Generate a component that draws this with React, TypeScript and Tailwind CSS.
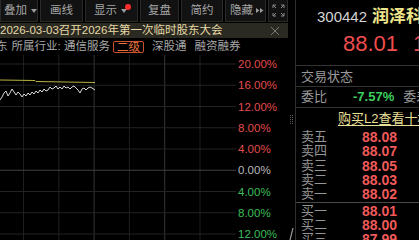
import React from 'react';

const tools = [
  { label: '叠加', w: 'w-[38px]', caret: true, pl: 'pl-[3px] justify-start' },
  { label: '画线', w: 'w-[43px]', pl: 'justify-center' },
  { label: '显示', w: 'w-[53px]', caret: true, dot: true, pl: 'pl-[8px] justify-start' },
  { label: '复盘', w: 'w-[39px]', pl: 'justify-center' },
  { label: '简约', w: 'w-[42px]', pl: 'justify-center' },
  { label: '隐藏', w: 'w-[41px]', more: true, pl: 'pl-[4px] justify-start' },
];

const axis = [
  { t: '20.00%', c: 'text-[#e04c4c]' },
  { t: '16.00%', c: 'text-[#e04c4c]' },
  { t: '12.00%', c: 'text-[#e04c4c]' },
  { t: '8.00%', c: 'text-[#e04c4c]' },
  { t: '4.00%', c: 'text-[#e04c4c]' },
  { t: '0.00%', c: 'text-[#b8b8b8]' },
  { t: '4.00%', c: 'text-[#3cbf5a]' },
  { t: '8.00%', c: 'text-[#3cbf5a]' },
  { t: '12.00%', c: 'text-[#3cbf5a]' },
];

const asks = [
  { k: '卖五', v: '88.08' },
  { k: '卖四', v: '88.07' },
  { k: '卖三', v: '88.05' },
  { k: '卖二', v: '88.03' },
  { k: '卖一', v: '88.02' },
];
const bids = [
  { k: '买一', v: '88.01' },
  { k: '买二', v: '88.00' },
  { k: '买三', v: '87.99' },
];

// price line, absolute y minus chart top (55)
const pricePts = [
  [0, 45], [2, 42], [4, 38], [6, 36], [8, 41], [10, 38], [12, 34], [14, 37], [16, 40], [18, 37],
  [20, 39], [22, 42], [24, 39], [26, 41], [28, 38], [30, 40], [32, 37], [34, 39], [36, 36], [38, 38],
  [40, 35], [42, 37], [44, 34], [46, 36], [48, 35], [50, 32], [52, 34], [54, 33], [56, 31], [58, 34],
  [60, 32], [62, 34], [64, 31], [66, 33], [68, 32], [70, 34], [72, 32], [74, 31], [76, 33], [78, 35],
  [80, 38], [82, 34], [84, 33], [86, 35], [88, 33], [90, 32], [92, 33], [95, 35],
];

const gridY = [0, 1, 2, 3, 4, 5, 6, 7, 8].map((i) => 9 + i * 21.25);
const gridX = [23.5, 58.8, 94.1, 129.4, 164.7, 200];

const Caret = () => (
  <svg width="6" height="4" viewBox="0 0 6 4" className="ml-[4px] shrink-0">
    <path d="M0 0h6L3 4z" fill="#9a9a9a" />
  </svg>
);

export default function App() {
  return (
    <div className="w-[419px] h-[240px] bg-black overflow-hidden flex font-['Liberation_Sans','Noto_Sans_CJK_SC',sans-serif]">
      {/* left: toolbar + chart */}
      <div className="w-[288px] shrink-0 flex flex-col">
        <div className="h-[23px] shrink-0 flex gap-[2px] items-start">
          {tools.map((t) => (
            <div
              key={t.label}
              className={`${t.w} ${t.pl} relative shrink-0 h-[22px] flex items-center whitespace-nowrap bg-[#121212] border-x border-b border-[#2a2a2a] text-[11.5px] text-[#a6a6a6]`}
            >
              <span>{t.label}</span>
              {t.caret && <Caret />}
              {t.more && (
                <svg width="8" height="5" viewBox="0 0 8 5" className="ml-[3px] shrink-0" fill="#9a9a9a">
                  <path d="M0 0l3.5 2.5L0 5zM4 0l3.5 2.5L4 5z" />
                </svg>
              )}
              {t.dot && <span className="absolute right-[6px] top-[4px] w-[6px] h-[6px] rounded-full bg-[#ff2d2d]" />}
            </div>
          ))}
          <div className="w-[20px] shrink-0 h-[22px] flex items-center justify-center bg-[#121212] border-x border-b border-[#2a2a2a]">
            <svg width="13" height="13" viewBox="0 0 13 13" fill="none" stroke="#8a8a8a" strokeWidth="1">
              <path d="M1 4V1h3M1 1l3 3M12 4V1H9M12 1L9 4M1 9v3h3M1 12l3-3M12 9v3H9M12 12L9 9" />
            </svg>
          </div>
        </div>

        <div className="h-[15px] shrink-0 flex items-center bg-[#2b2a22] text-[11.5px] text-[#e6d9a6] whitespace-nowrap">
          <span className="flex-1">2026-03-03召开2026年第一次临时股东大会</span>
          <svg width="10" height="10" viewBox="0 0 10 10" className="mr-[8px]" stroke="#7a7a72" strokeWidth="1">
            <path d="M1 1l8 8M9 1L1 9" />
          </svg>
        </div>

        <div className="h-[17px] shrink-0 flex items-center text-[11.5px] text-[#a8a8a8] whitespace-nowrap overflow-hidden">
          <span className="-ml-[4px]">东</span>
          <span className="ml-[4px]">所属行业: 通信服务</span>
          <span className="ml-[3px] px-[3px] h-[12px] leading-[11px] border border-[#c9522c] rounded-[2px] text-[#e8733e]">二级</span>
          <span className="ml-[8px]">深股通</span>
          <span className="ml-[8px]">融资融券</span>
        </div>

        <div className="flex-1 flex overflow-hidden">
          <svg width="236" height="185" className="shrink-0">
            {gridX.map((x, i) => (
              <line key={x} x1={x} y1="0" x2={x} y2="185" stroke={i === 2 || i === 4 ? '#353535' : '#1e1e1e'} strokeWidth="1" />
            ))}
            {gridY.map((y, i) => (
              <line key={y} x1="0" y1={y} x2="236" y2={y} stroke={i === 5 ? '#404040' : '#232323'} strokeWidth="1" />
            ))}
            <polyline points="0,25 35,25.5 36,26.5 95,27.5" fill="none" stroke="#b9b244" strokeWidth="1" />
            <polyline points={pricePts.map((p) => p.join(',')).join(' ')} fill="none" stroke="#d8d8d8" strokeWidth="1" />
          </svg>
          <div className="flex flex-col -mt-[1px] pl-[2px]">
            {axis.map((a, i) => (
              <div key={i} className={`h-[21.25px] shrink-0 flex items-center text-[11.5px] ${a.c}`}>
                {a.t}
              </div>
            ))}
          </div>
        </div>
      </div>

      {/* splitter */}
      <div className="w-[7px] shrink-0 flex flex-col items-center">
        <div className="h-[115px] shrink-0" />
        <svg width="4" height="9" viewBox="0 0 4 9" fill="#5a5a5a" className="shrink-0">
          <rect x="0" y="0" width="1" height="1" /><rect x="2" y="0" width="1" height="1" />
          <rect x="0" y="2" width="1" height="1" /><rect x="2" y="2" width="1" height="1" />
          <rect x="0" y="4" width="1" height="1" /><rect x="2" y="4" width="1" height="1" />
          <rect x="0" y="6" width="1" height="1" /><rect x="2" y="6" width="1" height="1" />
          <rect x="0" y="8" width="1" height="1" /><rect x="2" y="8" width="1" height="1" />
        </svg>
        <div className="flex-1" />
        <svg width="5" height="12" viewBox="0 0 5 12" className="shrink-0">
          <path d="M4 0L1 12" stroke="#9a9a9a" strokeWidth="1.2" />
        </svg>
      </div>

      {/* right: quote panel */}
      <div className="flex-1 min-w-0 flex flex-col border-l border-[#2e2e2e] whitespace-nowrap overflow-hidden">
        <div className="h-[33px] shrink-0 flex items-center pl-[8px]">
          <svg width="6" height="11" viewBox="0 0 6 11">
            <path d="M6 0v11L0 5.5z" fill="#6a6a6a" />
          </svg>
          <span className="ml-[13px] text-[15px] leading-[15px] text-[#d4d4d4]">300442</span>
          <span className="ml-[5px] text-[17px] font-bold text-[#efe58a]">润泽科技</span>
        </div>
        <div className="h-[33px] shrink-0 flex items-start pl-[47px] border-b border-[#333]">
          <span className="text-[22px] leading-[22px] text-[#f04d4d]">88.01</span>
          <span className="ml-[15px] text-[22px] leading-[22px] text-[#f04d4d]">1.39</span>
        </div>
        <div className="h-[21px] shrink-0 flex items-center pl-[5px] pt-[2px] border-b border-[#333] text-[13px] text-[#9a9a9a]">
          交易状态
        </div>
        <div className="h-[21px] shrink-0 flex items-center pl-[5px] border-b border-[#333] text-[13px] text-[#9a9a9a]">
          <span>委比</span>
          <span className="ml-[26px] font-bold text-[#3ccf5e]">-7.57%</span>
          <span className="ml-[9px]">委差</span>
        </div>
        <div className="h-[22px] shrink-0 flex items-center pl-[42px] text-[13px]">
          <span className="text-[#e8df94] underline underline-offset-[2px]">购买L2查看十档行情</span>
        </div>
        <div className="flex flex-col">
          {asks.map((r) => (
            <div key={r.k} className="h-[14.3px] shrink-0 flex items-center pl-[5px] text-[13px] leading-[14px]">
              <span className="w-[61px] text-[#959595]">{r.k}</span>
              <span className="font-semibold text-[14px] text-[#f05a5a]">{r.v}</span>
            </div>
          ))}
          <div className="h-[1px] shrink-0 bg-[#4a4a4a] my-[0.5px]" />
          {bids.map((r) => (
            <div key={r.k} className="h-[14.3px] shrink-0 flex items-center pl-[5px] text-[13px] leading-[14px]">
              <span className="w-[61px] text-[#959595]">{r.k}</span>
              <span className="font-semibold text-[14px] text-[#f05a5a]">{r.v}</span>
            </div>
          ))}
        </div>
      </div>
    </div>
  );
}
